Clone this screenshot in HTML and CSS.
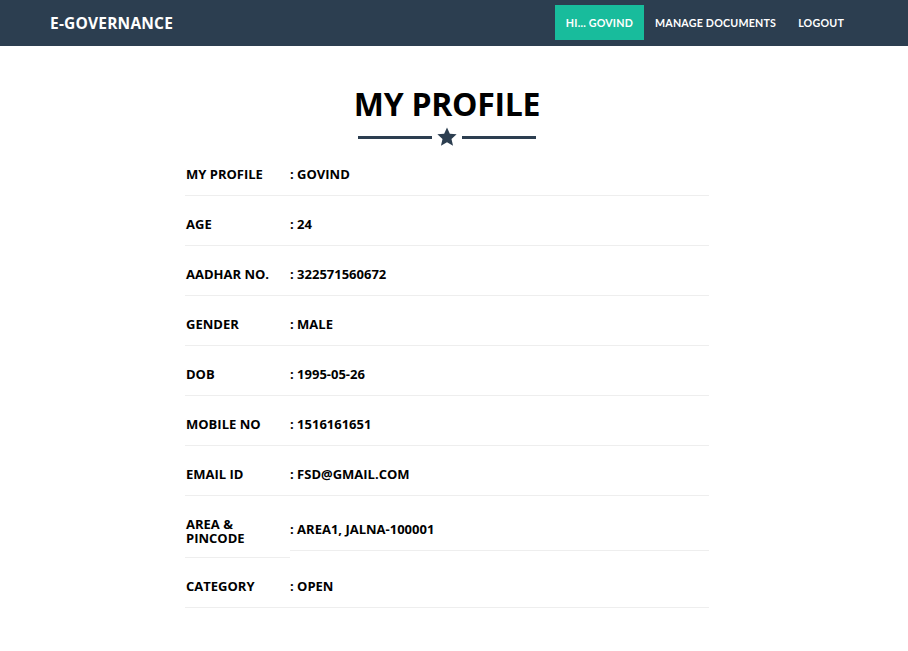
FILE: index.html
```html
<!DOCTYPE html>
<html>
<head>
<meta charset="utf-8">
<link rel="stylesheet" href="styles.css">
</head>
<body>
<nav class="navbar">
  <a class="brand" href="#">E-GOVERNANCE</a>
  <ul class="nav-links">
    <li><a class="active" href="#">HI... GOVIND</a></li>
    <li><a href="#">MANAGE DOCUMENTS</a></li>
    <li><a href="#">LOGOUT</a></li>
  </ul>
</nav>
<main class="profile">
  <h2 class="title">MY PROFILE</h2>
  <div class="divider">
    <span class="line"></span>
    <svg class="star" viewBox="0 0 24 24" width="22" height="22"><path d="M12 1.5l3.1 6.9 7.4.7-5.6 5 1.7 7.4L12 17.6l-6.6 3.9 1.7-7.4-5.6-5 7.4-.7z"/></svg>
    <span class="line"></span>
  </div>
  <div class="rows">
    <div class="row"><div class="label">MY PROFILE</div><div class="value">: GOVIND</div></div>
    <div class="row"><div class="label">AGE</div><div class="value">: 24</div></div>
    <div class="row"><div class="label">AADHAR NO.</div><div class="value">: 322571560672</div></div>
    <div class="row"><div class="label">GENDER</div><div class="value">: MALE</div></div>
    <div class="row"><div class="label">DOB</div><div class="value">: 1995-05-26</div></div>
    <div class="row"><div class="label">MOBILE NO</div><div class="value">: 1516161651</div></div>
    <div class="row"><div class="label">EMAIL ID</div><div class="value">: FSD@GMAIL.COM</div></div>
    <div class="row"><div class="label label-tall">AREA &amp; PINCODE</div><div class="value value-tall">: AREA1, JALNA-100001</div></div>
    <div class="row"><div class="label">CATEGORY</div><div class="value">: OPEN</div></div>
  </div>
</main>
</body>
</html>
```
FILE: styles.css
```css
* { box-sizing: border-box; }
body {
  margin: 0;
  background: #fff;
  font-family: "Open Sans", "DejaVu Sans", sans-serif;
  color: #000;
}
.navbar {
  height: 46px;
  background: #2c3e50;
  display: flex;
  align-items: center;
  justify-content: space-between;
  padding: 0 53px 0 50px;
}
.brand {
  color: #fff;
  text-decoration: none;
  font-weight: 700;
  font-size: 15.5px;
  letter-spacing: 0.2px;
  margin-top: -1px;
}
.nav-links {
  list-style: none;
  margin: 0;
  padding: 0;
  display: flex;
  align-items: center;
  margin-top: -1px;
}
.nav-links a {
  display: block;
  height: 35px;
  line-height: 35px;
  padding: 0 11px;
  color: #fff;
  text-decoration: none;
  font-family: Lato, "Open Sans", sans-serif;
  font-weight: 700;
  font-size: 10.7px;
  letter-spacing: 0.2px;
}
.nav-links a.active {
  background: #18bc9c;
}
.profile {
  width: 524px;
  margin-left: 185px;
  padding-top: 38px;
}
.title {
  margin: 0;
  text-align: center;
  font-size: 32px;
  line-height: 40px;
  font-weight: 700;
  letter-spacing: -0.3px;
}
.divider {
  display: flex;
  align-items: center;
  justify-content: center;
  gap: 4px;
  margin-top: 2px;
  height: 22px;
}
.line {
  width: 74px;
  height: 3px;
  background: #2c3e50;
}
.star {
  fill: #2c3e50;
}
.rows {
  margin-top: -2px;
}
.row {
  display: flex;
  align-items: flex-start;
}
.label, .value {
  font-size: 13px;
  font-weight: 700;
  line-height: 14px;
  padding: 21px 0 14px;
  border-bottom: 1px solid #eee;
}
.label {
  width: 105px;
  padding-left: 1px;
  padding-right: 10px;
}
.label-tall {
  padding-bottom: 12px;
}
.value {
  flex: 1;
}
.value-tall {
  padding-top: 26px;
}
```
